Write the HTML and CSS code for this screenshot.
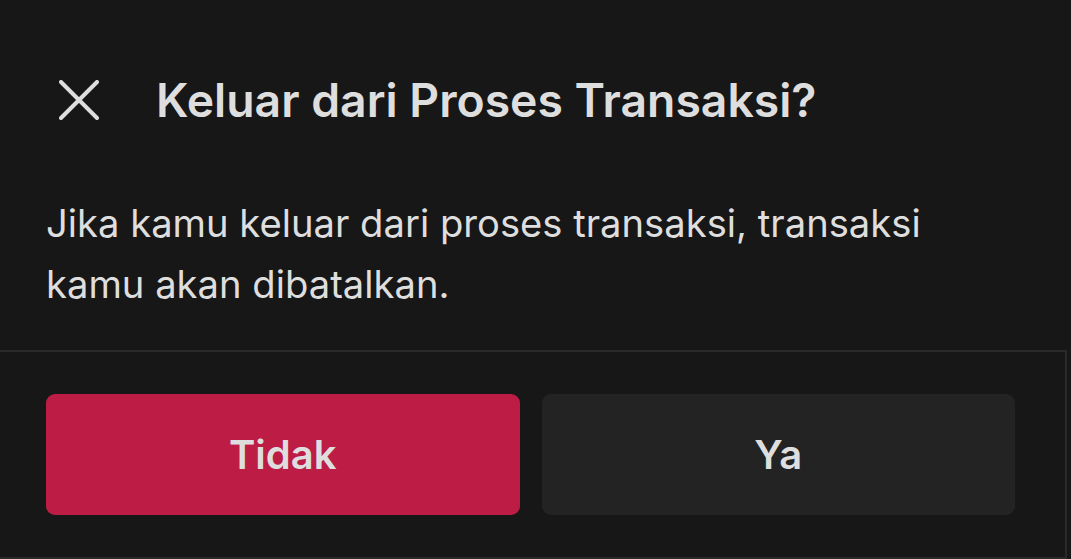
FILE: index.html
```html
<!DOCTYPE html>
<html lang="id">
<head>
<meta charset="utf-8">
<link rel="stylesheet" href="styles.css">
</head>
<body>
<div class="sheet">
  <div class="header">
    <button class="close" aria-label="Tutup">
      <svg width="40" height="40" viewBox="0 0 40 40" fill="none" stroke="#dedede" stroke-width="4" stroke-linecap="round">
        <path d="M2 2 L38 38 M38 2 L2 38"/>
      </svg>
    </button>
    <h1 class="title">Keluar dari Proses Transaksi?</h1>
  </div>
  <p class="message">Jika kamu keluar dari proses transaksi, transaksi<br>kamu akan dibatalkan.</p>
  <div class="footer">
    <button class="btn btn-primary">Tidak</button>
    <button class="btn btn-secondary">Ya</button>
  </div>
</div>
</body>
</html>
```
FILE: styles.css
```css
html, body {
  margin: 0;
  padding: 0;
  background: #171717;
}
body {
  font-family: Inter, "Noto Sans", sans-serif;
  color: #dedede;
  width: 1071px;
  height: 559px;
  overflow: hidden;
}
.sheet {
  padding-top: 70px;
}
.header {
  display: flex;
  align-items: center;
  height: 60px;
  padding-left: 59px;
}
.close {
  background: none;
  border: 0;
  padding: 0;
  width: 40px;
  height: 40px;
  display: flex;
  cursor: pointer;
}
.title {
  margin: 0 0 0 57px;
  font-size: 46.3px;
  font-weight: 600;
  letter-spacing: 0;
  color: #dedede;
}
.message {
  margin: 0;
  padding: 63px 0 0 46px;
  font-size: 38.2px;
  line-height: 61px;
  color: #dedede;
}
.footer {
  margin-top: 35px;
  width: 1067px;
  border-top: 2px solid #2a2a2a;
  border-right: 2px solid #2a2a2a;
  border-bottom: 2px solid #2a2a2a;
  padding: 42px 50px 40px 46px;
  box-sizing: border-box;
  height: 209px;
  display: flex;
  gap: 22px;
}
.btn {
  flex: 1;
  height: 121px;
  border: 0;
  border-radius: 9px;
  font-family: Inter, "Noto Sans", sans-serif;
  font-size: 40px;
  font-weight: 600;
  color: #dedede;
}
.btn-primary {
  background: #bd1c45;
}
.btn-secondary {
  background: #232323;
}
```
